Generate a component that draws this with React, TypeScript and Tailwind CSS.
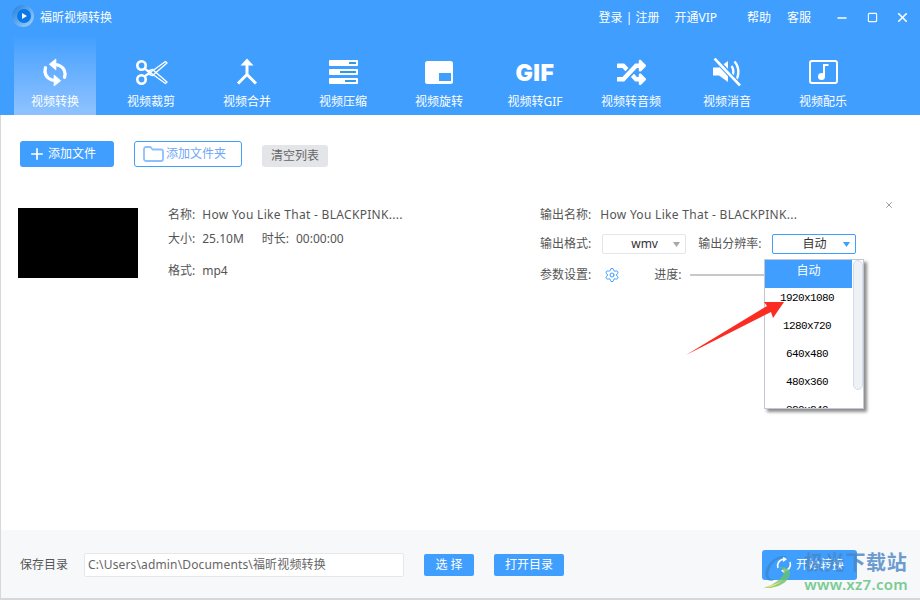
import { Plus, Settings, X, Minus, Square } from "lucide-react";
import { FaRandom } from "react-icons/fa";

const FONT = "font-['Noto_Sans','Noto_Sans_CJK_SC',sans-serif]";

function SyncIcon() {
  return (
    <svg width="26" height="33" viewBox="0 0 30 34" fill="none">
      <g transform="matrix(-1 0 0 1 30 0)">
        <path d="M4 22.5C2.2 17 4.6 10.5 11 8.6L15.5 7.8" stroke="#fff" strokeWidth="3.8" strokeLinecap="round" />
        <path d="M14 1.5L21.5 7.5L14 14Z" fill="#fff" stroke="#fff" strokeLinejoin="round" />
        <path d="M26 11.5C27.8 17 25.4 23.5 19 25.4L14.5 26.2" stroke="#fff" strokeWidth="3.8" strokeLinecap="round" />
        <path d="M16 32.5L8.5 26.5L16 20Z" fill="#fff" stroke="#fff" strokeLinejoin="round" />
      </g>
    </svg>
  );
}

function ScissorsIcon() {
  return (
    <svg width="33" height="25" viewBox="0 0 33 25" fill="none">
      <path d="M13 14L30.5 1.5L32 3L17.5 15.5Z" stroke="#fff" strokeWidth="1.4" strokeLinejoin="round" />
      <path d="M13 11L30.5 23.5L32 22L17.5 9.5Z" stroke="#fff" strokeWidth="1.4" strokeLinejoin="round" />
      <circle cx="6.5" cy="5.5" r="4.2" stroke="#fff" strokeWidth="2.6" fill="#409eff" />
      <circle cx="6.5" cy="19.5" r="4.2" stroke="#fff" strokeWidth="2.6" fill="#409eff" />
      <path d="M9.5 8.5L15 12.5L9.5 16.5" stroke="#fff" strokeWidth="2.2" />
    </svg>
  );
}

function MergeIcon() {
  return (
    <svg width="22" height="28" viewBox="0 0 22 28" fill="none">
      <path d="M11 0.5L17.5 7.5H4.5Z" fill="#fff" />
      <path d="M11 6V16.5L2 25.5M11 16.5L20 25.5" stroke="#fff" strokeWidth="3" />
    </svg>
  );
}

function CompressIcon() {
  return (
    <svg width="29" height="24" viewBox="0 0 29 24">
      <rect x="0" y="0" width="29" height="6" rx="1" fill="#fff" />
      <rect x="20" y="2" width="7" height="2" fill="#2f9be8" />
      <rect x="0" y="9" width="29" height="6" rx="1" fill="#fff" />
      <rect x="11" y="11" width="16" height="2" fill="#2f9be8" />
      <rect x="0" y="18" width="29" height="6" rx="1" fill="#fff" />
      <rect x="16" y="20" width="11" height="2" fill="#2f9be8" />
    </svg>
  );
}

function RotateIcon() {
  return (
    <svg width="28" height="23" viewBox="0 0 28 23">
      <rect x="0" y="0" width="28" height="23" rx="2.5" fill="#fff" />
      <rect x="14" y="12" width="12" height="8" fill="#409eff" />
    </svg>
  );
}

function MuteIcon() {
  return (
    <svg width="28" height="28" viewBox="0 0 28 28" fill="none">
      <path d="M0 9.5H6L15 3V24L6 17.5H0Z" fill="#fff" />
      <path d="M18.5 8C21 11 21 16 18.5 19.5" stroke="#fff" strokeWidth="2.4" />
      <path d="M21.5 3.5C26.5 9 26.5 18 22 24" stroke="#fff" strokeWidth="2.4" />
      <path d="M2 0.5L26.5 27" stroke="#409eff" strokeWidth="5" />
      <path d="M1.5 0.5L27 27.5" stroke="#fff" strokeWidth="2.6" />
    </svg>
  );
}

function MusicIcon() {
  return (
    <svg width="29" height="24" viewBox="0 0 29 24" fill="none">
      <rect x="1" y="1" width="27" height="22" rx="2" stroke="#fff" strokeWidth="2" />
      <circle cx="12.5" cy="16.5" r="3.5" fill="#fff" />
      <path d="M15 16V5H19.5" stroke="#fff" strokeWidth="2" />
    </svg>
  );
}

function Logo() {
  return (
    <svg width="22" height="22" viewBox="0 0 22 22" className="mt-[-3px]">
      <defs>
        <linearGradient id="lg" x1="0" y1="0" x2="1" y2="1">
          <stop offset="0" stopColor="#1a7fe0" />
          <stop offset="1" stopColor="#a9d4fb" />
        </linearGradient>
      </defs>
      <circle cx="11" cy="11" r="11" fill="url(#lg)" />
      <circle cx="12" cy="11" r="7" fill="#0a78ea" />
      <path d="M10 8L15 11L10 14Z" fill="#fff" />
    </svg>
  );
}

function FolderIcon() {
  return (
    <svg width="21" height="16" viewBox="0 0 21 16" fill="none">
      <path
        d="M1 3C1 1.9 1.9 1 3 1H7.5L9.5 3.5H18C19.1 3.5 20 4.4 20 5.5V13C20 14.1 19.1 15 18 15H3C1.9 15 1 14.1 1 13Z"
        stroke="#8cc0ff"
        strokeWidth="1.8"
        strokeLinejoin="round"
      />
    </svg>
  );
}

const tabs = [
  { label: "视频转换", icon: <SyncIcon />, active: true },
  { label: "视频裁剪", icon: <ScissorsIcon /> },
  { label: "视频合并", icon: <MergeIcon /> },
  { label: "视频压缩", icon: <CompressIcon /> },
  { label: "视频旋转", icon: <RotateIcon /> },
  {
    label: "视频转GIF",
    icon: <span className="mt-[2px] font-['Inter'] text-[23px] font-black leading-none tracking-[0.5px] text-white">GIF</span>,
  },
  { label: "视频转音频", icon: <FaRandom size={29} color="#fff" /> },
  { label: "视频消音", icon: <MuteIcon /> },
  { label: "视频配乐", icon: <MusicIcon /> },
];

function Tab({ label, icon, active }: { label: string; icon: React.ReactNode; active?: boolean }) {
  return (
    <div
      className={`flex h-20 w-[82px] flex-col items-center ${
        active ? "bg-gradient-to-b from-[#409eff] to-[#8fc3ff]" : ""
      }`}
    >
      <div className="flex h-[54px] w-full items-center justify-center pt-[20px]">{icon}</div>
      <span className="mt-[5px] whitespace-nowrap text-xs leading-4 text-white">{label}</span>
    </div>
  );
}

function Header() {
  return (
    <header className="flex h-[115px] flex-col bg-[#409eff] text-white">
      <div className="flex h-[35px] items-center pl-3 pr-[10px]">
        <Logo />
        <span className="ml-[6px] text-xs">福昕视频转换</span>
        <div className="ml-auto flex items-center text-xs">
          <span>登录 | 注册</span>
          <span className="ml-[15px]">开通VIP</span>
          <span className="ml-[30px]">帮助</span>
          <span className="ml-[16px]">客服</span>
          <Minus size={14} strokeWidth={2.2} className="ml-6" />
          <Square size={11} strokeWidth={2.4} className="ml-[18px]" />
          <X size={15} strokeWidth={2.6} className="ml-[17px]" />
        </div>
      </div>
      <nav className="flex gap-[14px] pl-[14px]">
        {tabs.map((t) => (
          <Tab key={t.label} {...t} />
        ))}
      </nav>
    </header>
  );
}

function Toolbar() {
  return (
    <div className="flex items-start pl-[19px] pt-[26px]">
      <button className="flex h-[26px] w-[94px] items-center rounded-[3px] bg-[#409eff] pl-2 text-xs text-white">
        <Plus size={18} strokeWidth={2.2} />
        <span className="ml-[2px]">添加文件</span>
      </button>
      <button className="ml-5 flex h-[26px] w-[108px] items-center rounded-[3px] border border-[#409eff] bg-white pl-2 text-xs text-[#6fa8f5]">
        <FolderIcon />
        <span className="ml-[2px]">添加文件夹</span>
      </button>
      <button className="ml-5 mt-1 h-[22px] w-[66px] rounded-[3px] bg-[#e4e5e8] text-xs text-[#666]">清空列表</button>
    </div>
  );
}

function Row({ label, value, spaced, className = "" }: { label: string; value: string; spaced?: boolean; className?: string }) {
  return (
    <div className={`flex text-xs leading-[18px] text-[#555] ${className}`}>
      <span>{label}</span>
      <span className={`ml-[7px] ${spaced ? "tracking-[0.3px]" : ""}`}>{value}</span>
    </div>
  );
}

function SourceInfo() {
  return (
    <div className="ml-[30px] mt-[-2px] w-[372px]">
      <Row label="名称:" value="How You Like That - BLACKPINK...." spaced />
      <div className="mt-[6px] flex">
        <Row label="大小:" value="25.10M" />
        <Row label="时长:" value="00:00:00" className="ml-[18px]" />
      </div>
      <Row label="格式:" value="mp4" className="mt-[14px]" />
    </div>
  );
}

function Caret({ color }: { color: string }) {
  return (
    <svg width="7" height="5" viewBox="0 0 7 5">
      <path d="M0 0H7L3.5 5Z" fill={color} />
    </svg>
  );
}

function OutputInfo() {
  const options = ["1920x1080", "1280x720", "640x480", "480x360", "320x240"];
  return (
    <div className="relative mt-[-2px] flex-1 text-xs text-[#555]">
      <div className="flex leading-[18px]">
        <span>输出名称:</span>
        <span className="ml-[9px] tracking-[0.3px]">How You Like That - BLACKPINK...</span>
      </div>
      <div className="mt-[10px] flex items-center">
        <span>输出格式:</span>
        <div className="ml-[11px] flex h-5 w-[84px] items-center rounded-[2px] border border-[#e4e5e8] pr-[5px]">
          <span className="ml-[28px] text-[#333]">wmv</span>
          <span className="ml-auto flex"><Caret color="#a8a8a8" /></span>
        </div>
        <span className="ml-3">输出分辨率:</span>
        <div className="ml-[11px] flex h-5 w-[84px] items-center rounded-[2px] border border-[#409eff] pr-[5px]">
          <span className="ml-[29px] text-[#333]">自动</span>
          <span className="ml-auto flex"><Caret color="#409eff" /></span>
        </div>
      </div>
      <div className="mt-[12px] flex items-center leading-[18px]">
        <span>参数设置:</span>
        <Settings size={16} strokeWidth={1.5} color="#409eff" className="ml-[13px]" />
        <span className="ml-[34px]">进度:</span>
        <div className="ml-[9px] h-[2px] w-[90px] bg-[#c8c8c8]" />
      </div>
      <X size={10} strokeWidth={2.4} color="#9aa0a8" className="absolute left-[344px] top-[-6px]" />

      <div className="absolute left-[224px] top-[53px] h-[150px] w-[100px] overflow-hidden border border-[#c4c6d6] bg-white shadow-[3px_3px_3px_rgba(0,0,0,0.45)]">
        <div className="mr-[11px] flex h-7 items-start justify-center bg-[#409eff] pt-[1px] text-[12px] leading-5 text-white">自动</div>
        {options.map((o) => (
          <div key={o} className="mr-[11px] flex h-7 items-start justify-center pr-[3px] font-['Liberation_Mono'] text-[11px] leading-5 tracking-[-0.6px] text-black">
            {o}
          </div>
        ))}
        <div className="absolute right-0 top-0 h-[130px] w-[10px] rounded-[5px] border border-[#d6dce6] bg-[#eef2f6]" />
      </div>
    </div>
  );
}

function FileRow() {
  return (
    <div className="flex pl-[17px] pt-[41px]">
      <div className="h-[70px] w-[120px] bg-black" />
      <SourceInfo />
      <OutputInfo />
    </div>
  );
}

function Footer() {
  return (
    <footer className="mt-auto flex h-[70px] items-center border-b-2 border-[#d8d8d8] bg-[#f7f8fa] pl-[19px] pt-[2px] text-xs">
      <span className="text-[#555]">保存目录</span>
      <div className="ml-4 flex h-6 w-[320px] items-center rounded-[2px] border border-[#e6e7ea] bg-white pl-[3px] tracking-[0.15px] text-[#666]">
        C:\Users\admin\Documents\福昕视频转换
      </div>
      <button className="ml-5 h-[22px] w-[50px] rounded-[2px] bg-[#409eff] text-white">选 择</button>
      <button className="ml-5 h-[22px] w-[70px] rounded-[2px] bg-[#409eff] text-white">打开目录</button>
      <button className="ml-[198px] flex h-[30px] w-[95px] items-center rounded-[3px] bg-[#409eff] pl-[13px] text-white">
        <svg width="18" height="18" viewBox="0 0 18 18" fill="none">
          <path d="M3 12C1.5 8 4 3.5 9 3.2" stroke="#fff" strokeWidth="1.6" />
          <path d="M8 0.5L12 3.2L8 6Z" fill="#fff" />
          <path d="M15 6C16.5 10 14 14.5 9 14.8" stroke="#fff" strokeWidth="1.6" />
          <path d="M10 17.5L6 14.8L10 12Z" fill="#fff" />
        </svg>
        <span className="ml-[3px]">开始转换</span>
      </button>
    </footer>
  );
}

function Watermark() {
  return (
    <div className="pointer-events-none absolute bottom-[6px] right-[12px] flex items-center opacity-80">
      <svg width="38" height="38" viewBox="0 0 50 46" fill="none" className="mr-[5px]" preserveAspectRatio="none">
        <path d="M6 22C10 8 26 0 36 5C24 4 12 12 10 24C9 30 12 33 18 32C12 36 4 32 6 22Z" fill="#3a8ad0" />
        <path d="M4 42C18 44 40 36 38 22C34 16 26 16 22 18C30 18 32 24 28 28C22 35 12 40 4 42Z" fill="#6cc26c" />
        <path d="M4 42C14 42 24 38 28 32C22 38 12 38 4 42Z" fill="#eadb55" />
      </svg>
      <div className="flex flex-col items-start">
        <span className="font-['Noto_Sans_CJK_SC'] text-[20px] font-bold leading-[25px] tracking-[0.6px] text-[#4a86c4]">极光下载站</span>
        <span className="font-['Noto_Sans'] text-[15px] font-semibold leading-[20px] tracking-[0.3px] text-[#5cc07a]">www.xz7.com</span>
      </div>
    </div>
  );
}

function RedArrow() {
  return (
    <svg width="104" height="60" viewBox="0 0 104 60" className="absolute left-[684px] top-[298px]">
      <path d="M2 57L83 8L80 4L100 4L89 20L87 14Z" fill="#fb2c22" />
    </svg>
  );
}

export default function App() {
  return (
    <div className={`relative flex h-[600px] w-[920px] flex-col overflow-hidden bg-white ${FONT}`}>
      <Header />
      <main className="flex flex-1 flex-col border-l border-[#d8d8d8]">
        <Toolbar />
        <FileRow />
        <Footer />
      </main>
      <RedArrow />
      <Watermark />
    </div>
  );
}
